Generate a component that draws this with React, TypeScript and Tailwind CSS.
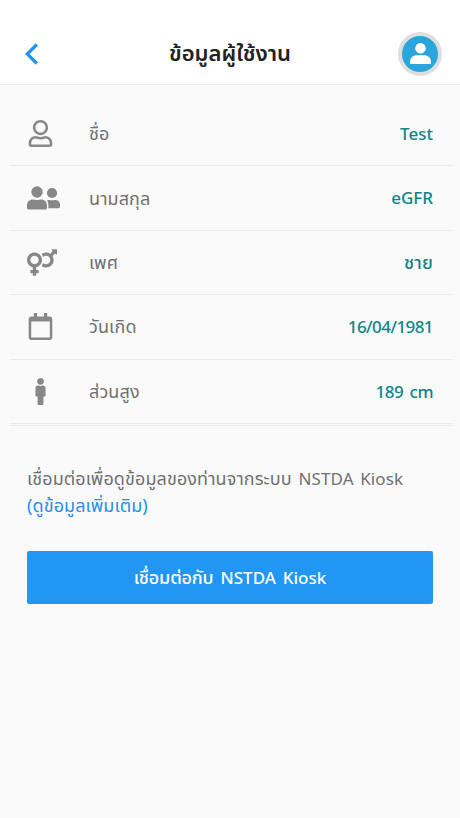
import { FaRegUser, FaVenusMars, FaRegCalendar, FaMale } from 'react-icons/fa';
import type { ReactNode } from 'react';

function PeopleIcon() {
  return (
    <svg width="33" height="24" viewBox="0 0 33 24" fill="currentColor">
      <circle cx="10" cy="6" r="5.7" />
      <circle cx="25" cy="7" r="5.1" />
      <path d="M0 21.800v-2c0-4 2.400-6.200 5.800-6.200 1.500 0 2.400.5 4.200.5s2.700-.5 4.200-.5c3.400 0 5.800 2.200 5.800 6.200v2c0 1.100-.7 1.800-1.800 1.800H1.800C.7 23.600 0 22.900 0 21.800z" />
      <path d="M20 14.200c.5-.2 1-.3 1.800-.3 1.300 0 1.800.4 3.200.4s2-.4 3.200-.4c3 0 4.900 2.100 4.900 5.300v1.200c0 1.100-.7 1.800-1.800 1.800h-9.900v-2.600c0-2.100-.4-3.900-1.400-5.400z" />
    </svg>
  );
}

type RowProps = { icon: ReactNode; label: string; value: string; valueClass: string };

const rows: RowProps[] = [
  { icon: <FaRegUser size={27} />, label: 'ชื่อ', value: 'Test', valueClass: 'text-[17px]' },
  { icon: <PeopleIcon />, label: 'นามสกุล', value: 'eGFR', valueClass: 'text-[17px]' },
  { icon: <FaVenusMars size={27} className="w-[30px]" />, label: 'เพศ', value: 'ชาย', valueClass: 'text-[18px] tracking-[0.2px]' },
  { icon: <FaRegCalendar size={27} />, label: 'วันเกิด', value: '16/04/1981', valueClass: 'text-[17px] tracking-[-0.57px]' },
  { icon: <FaMale size={27} />, label: 'ส่วนสูง', value: '189 cm', valueClass: 'text-[17px] tracking-[-0.5px] [word-spacing:2.5px]' },
];

function Row({ icon, label, value, valueClass }: RowProps) {
  return (
    <li className="flex h-[64.4px] items-center border-b border-[#ececec] pr-5 pl-[17px]">
      <span className="flex w-[62px] shrink-0 items-center text-[#888]">{icon}</span>
      <span className="text-[18px] tracking-[0.1px] text-[#707070]">{label}</span>
      <span className={`ml-auto font-medium text-[#0f858a] ${valueClass}`}>{value}</span>
    </li>
  );
}

export default function App() {
  return (
    <div className="flex h-screen flex-col overflow-hidden bg-[#fafafa] font-['Noto_Sans','Noto_Sans_Thai',sans-serif]">
      <header className="grid h-[85px] shrink-0 grid-cols-[80px_1fr_80px] items-center border-b border-[#ededed] bg-white pt-[23px]">
        <button className="flex pl-[25px] text-[#2490ec]" aria-label="Back">
          <svg width="13" height="22" viewBox="0 0 13 22" fill="none" stroke="currentColor" strokeWidth="3.2">
            <path d="M11.800 1.500 2.300 11l9.500 9.500" />
          </svg>
        </button>
        <h1 className="pb-[3px] text-center text-[22px] leading-8 font-semibold text-[#222]">ข้อมูลผู้ใช้งาน</h1>
        <div className="mr-[18px] flex size-11 items-center justify-center justify-self-end rounded-full border-4 border-[#dedede] bg-[#2aa6dc]">
          <svg width="21" height="21" viewBox="0 0 21 21" fill="white">
            <circle cx="10.500" cy="5.200" r="5.200" />
            <path d="M0 19.800v-1.300C0 14.800 3.200 12.200 7 12.200h7c3.800 0 7 2.600 7 6.300v1.300q0 1.200-1.200 1.200H1.200Q0 21 0 19.800z" />
          </svg>
        </div>
      </header>
      <main className="pt-[17px]">
        <ul className="mr-[7px] ml-[10px] border-b border-[#ececec] pb-px">
          {rows.map((row) => (
            <Row key={row.label} {...row} />
          ))}
        </ul>
        <section className="px-[27px] pt-[39px]">
          <p className="text-[18px] leading-[26px] whitespace-nowrap text-[#707070] [word-spacing:2px]">
            <span className="tracking-[0.1px]">เชื่อมต่อเพื่อดูข้อมูลของท่านจากระบบ </span>
            <span className="text-[17px] tracking-[0.1px]">NSTDA Kiosk</span>
          </p>
          <a className="block text-[18px] leading-[26px] tracking-[0.1px] text-[#2490ec]">(ดูข้อมูลเพิ่มเติม)</a>
          <button className="mt-[33px] h-[53px] w-full rounded-[2px] bg-[#2196f3] text-[18px] font-medium text-white [word-spacing:2.5px]">
            <span className="tracking-[-0.15px]">เชื่อมต่อกับ </span>
            <span className="text-[17px]">NSTDA Kiosk</span>
          </button>
        </section>
      </main>
    </div>
  );
}
